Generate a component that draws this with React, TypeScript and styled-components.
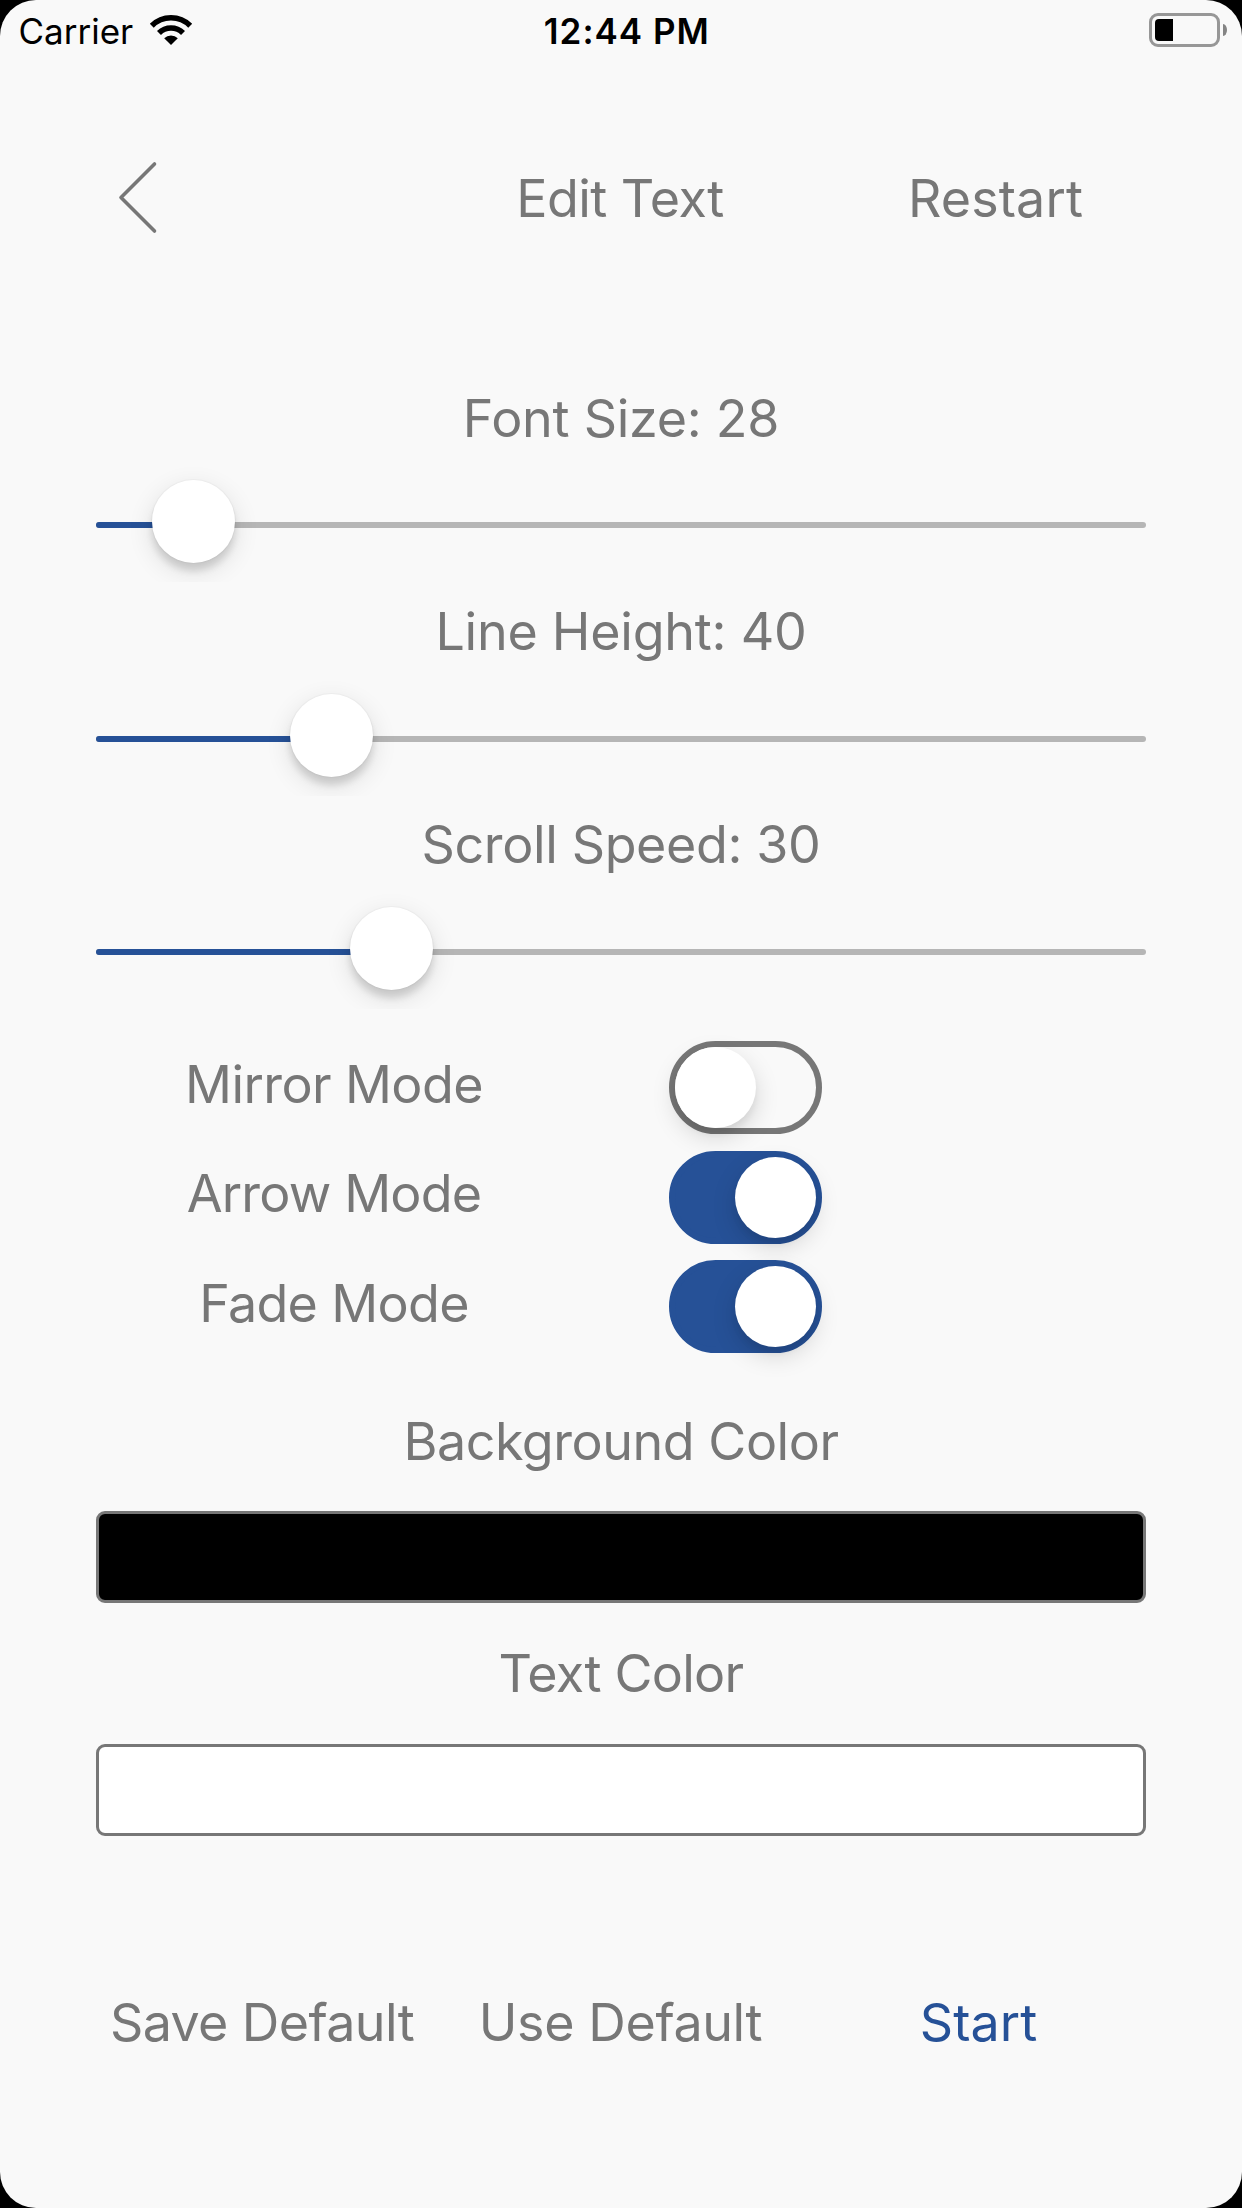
import React, { useState } from "react";
import styled, { createGlobalStyle } from "styled-components";

const GREY = "#777777";
const BLUE = "#265197";
const PAPER = "#f9f9f9";

const GlobalStyle = createGlobalStyle`
  *, *::before, *::after { box-sizing: border-box; }
  body { margin: 0; background: #000; }
`;

const Screen = styled.main`
  display: flex;
  flex-direction: column;
  width: 1242px;
  height: 2208px;
  border-radius: 36px;
  overflow: hidden;
  background: ${PAPER};
  color: ${GREY};
  font-family: Inter, "Liberation Sans", sans-serif;
`;

/* Status bar */

const StatusBar = styled.header`
  display: grid;
  grid-template-columns: 1fr auto 1fr;
  height: 60px;
  padding: 0 15px 0 18.5px;
  color: #000;
  font-size: 35px;
  line-height: 44px;
`;

const Carrier = styled.div`
  display: flex;
  align-items: flex-start;
  gap: 15.8px;
  padding-top: 9px;
`;

const WifiIcon = styled.svg`
  display: block;
  width: 44px;
  height: 32px;
  margin-top: 5px;
`;

const Clock = styled.time`
  padding-top: 9px;
  margin-left: 8.2px;
  font-weight: 600;
  letter-spacing: 1px;
`;

const Battery = styled.div`
  display: flex;
  justify-content: flex-end;
  align-items: center;
  gap: 3px;
  height: 34px;
  margin-top: 13px;
`;

const BatteryCase = styled.div`
  width: 71px;
  height: 34px;
  padding: 3px;
  border: 3px solid #979797;
  border-radius: 9px;
`;

const BatteryLevel = styled.div`
  width: 18px;
  height: 22px;
  border-radius: 4px 0 0 4px;
  background: #000;
`;

const BatteryTip = styled.div`
  width: 4px;
  height: 12px;
  border-radius: 0 4px 4px 0 / 0 6px 6px 0;
  background: #858585;
`;

/* Text */

const Label = styled.div<{ $tracking: number }>`
  padding-top: 1px;
  font-size: 52px;
  line-height: 63px;
  text-align: center;
  white-space: nowrap;
  letter-spacing: ${(p) => p.$tracking}px;
`;

const TextButton = styled.button<{ $tracking: number; $primary?: boolean }>`
  height: 64px;
  padding: 1px 0 0;
  border: 0;
  background: none;
  font: 400 52px/63px Inter, "Liberation Sans", sans-serif;
  white-space: nowrap;
  letter-spacing: ${(p) => p.$tracking}px;
  color: ${(p) => (p.$primary ? BLUE : GREY)};
`;

/* Navigation */

const NavBar = styled.nav`
  display: grid;
  grid-template-columns: 441px 358px 393px;
  align-items: start;
  height: 64px;
  margin-top: 106px;
`;

const BackButton = styled.button`
  display: flex;
  justify-self: start;
  margin: -5px 0 0 117px;
  padding: 0;
  border: 0;
  background: none;
`;

/* Sliders */

const SliderList = styled.section`
  margin-top: 155.9px;
  padding: 0 96px;
`;

const SliderField = styled.div`
  display: flex;
  flex-direction: column;
  gap: 10.5px;
  height: 213.25px;
`;

const SliderBox = styled.div`
  position: relative;
  height: 122px;
  padding-top: 62px;
  overflow: hidden;
`;

const Track = styled.div`
  height: 6px;
  border-radius: 3px;
  overflow: hidden;
  background: #b6b6b6;
`;

const TrackFill = styled.div`
  height: 6px;
  background: ${BLUE};
`;

const SliderThumb = styled.div`
  position: absolute;
  top: 20px;
  width: 83px;
  height: 83px;
  border-radius: 50%;
  background: #fff;
  box-shadow:
    0 0 1px 1px rgba(0, 0, 0, 0.03),
    0 8px 7px rgba(0, 0, 0, 0.12),
    0 8px 26px rgba(0, 0, 0, 0.12);
`;

/* Switches */

const SwitchList = styled.section`
  margin-top: 15.55px;
`;

const SwitchRow = styled.div`
  display: grid;
  grid-template-columns: 500px 153px;
  column-gap: 85px;
  height: 109.4px;
  padding-left: 84px;
`;

const SwitchCaption = styled.div`
  padding-top: 10.7px;
`;

const Switch = styled.button<{ $on: boolean }>`
  display: flex;
  justify-content: ${(p) => (p.$on ? "flex-end" : "flex-start")};
  width: 153px;
  height: 93px;
  padding: 0;
  border: 6px solid ${(p) => (p.$on ? BLUE : GREY)};
  border-radius: 47px;
  background: ${(p) => (p.$on ? BLUE : "transparent")};
`;

const SwitchThumb = styled.span`
  width: 81px;
  height: 81px;
  border-radius: 50%;
  background: #fff;
  box-shadow:
    0 9px 24px rgba(0, 0, 0, 0.15),
    0 6px 6px rgba(0, 0, 0, 0.05);
`;

/* Colours */

const ColorList = styled.section`
  display: flex;
  flex-direction: column;
  gap: 38px;
  margin-top: 39.7px;
  padding: 0 96px;
`;

const ColorField = styled.div`
  display: flex;
  flex-direction: column;
  gap: 38.3px;
`;

const Swatch = styled.div<{ $color: string }>`
  height: 92px;
  border: 3px solid ${GREY};
  border-radius: 9px;
  background: ${(p) => p.$color};
`;

const ActionBar = styled.footer`
  display: grid;
  grid-template-columns: 358px 359px 357px;
  margin-top: 154.3px;
  padding-left: 83px;
`;

const sliders = [
  { name: "Font Size", value: 28, fraction: 0.058, tracking: -0.27 },
  { name: "Line Height", value: 40, fraction: 0.2008, tracking: -0.25 },
  { name: "Scroll Speed", value: 30, fraction: 0.263, tracking: -0.38 },
];

const modes = [
  { name: "Mirror Mode", tracking: -0.6 },
  { name: "Arrow Mode", tracking: -0.82 },
  { name: "Fade Mode", tracking: -0.68 },
];

const colors = [
  { name: "Background Color", color: "#000", tracking: -0.46 },
  { name: "Text Color", color: "#fff", tracking: -0.74 },
];

function Slider({ fraction }: { fraction: number }) {
  return (
    <SliderBox>
      <Track>
        <TrackFill style={{ width: 966 * fraction + 42 }} />
      </Track>
      <SliderThumb style={{ left: Math.round(966 * fraction) }} />
    </SliderBox>
  );
}

export default function App() {
  const [enabled, setEnabled] = useState([false, true, true]);
  const toggle = (index: number) =>
    setEnabled(enabled.map((on, i) => (i === index ? !on : on)));

  return (
    <>
      <GlobalStyle />
      <Screen>
        <StatusBar>
          <Carrier>
            Carrier
            <WifiIcon viewBox="149 14 44 32">
              <g fill="none" stroke="#000" strokeWidth="5.6">
                <path d="M151.77 25.77A27.2 27.2 0 0 1 190.23 25.77" />
                <path d="M158.98 32.98A17 17 0 0 1 183.02 32.98" />
              </g>
              <path d="M171 45L164.2 38.2A9.6 9.6 0 0 1 177.8 38.2Z" />
            </WifiIcon>
          </Carrier>
          <Clock>12:44 PM</Clock>
          <Battery>
            <BatteryCase>
              <BatteryLevel />
            </BatteryCase>
            <BatteryTip />
          </Battery>
        </StatusBar>

        <NavBar>
          <BackButton aria-label="Back">
            <svg width="42" height="74" viewBox="117 161 42 74" fill="none">
              <path
                d="M154.5 164L121 197.6L154.5 231"
                stroke={GREY}
                strokeWidth="3.6"
                strokeLinecap="round"
                strokeLinejoin="round"
              />
            </svg>
          </BackButton>
          <TextButton $tracking={-0.52}>Edit Text</TextButton>
          <TextButton $tracking={0.11}>Restart</TextButton>
        </NavBar>

        <SliderList>
          {sliders.map((s) => (
            <SliderField key={s.name}>
              <Label $tracking={s.tracking}>{`${s.name}: ${s.value}`}</Label>
              <Slider fraction={s.fraction} />
            </SliderField>
          ))}
        </SliderList>

        <SwitchList>
          {modes.map((m, i) => (
            <SwitchRow key={m.name}>
              <SwitchCaption>
                <Label $tracking={m.tracking}>{m.name}</Label>
              </SwitchCaption>
              <Switch
                $on={enabled[i]}
                role="switch"
                aria-checked={enabled[i]}
                aria-label={m.name}
                onClick={() => toggle(i)}
              >
                <SwitchThumb />
              </Switch>
            </SwitchRow>
          ))}
        </SwitchList>

        <ColorList>
          {colors.map((c) => (
            <ColorField key={c.name}>
              <Label $tracking={c.tracking}>{c.name}</Label>
              <Swatch $color={c.color} />
            </ColorField>
          ))}
        </ColorList>

        <ActionBar>
          <TextButton $tracking={-0.62}>Save Default</TextButton>
          <TextButton $tracking={-0.39}>Use Default</TextButton>
          <TextButton $tracking={0.05} $primary>
            Start
          </TextButton>
        </ActionBar>
      </Screen>
    </>
  );
}
